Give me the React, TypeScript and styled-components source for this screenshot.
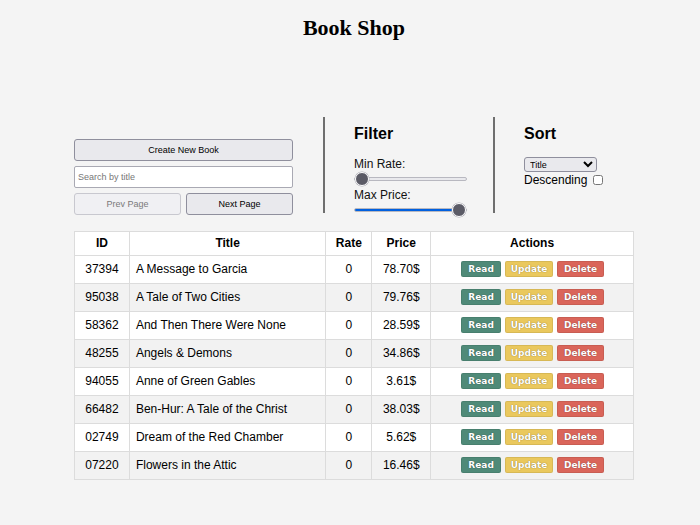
import React from 'react'
import styled, { createGlobalStyle } from 'styled-components'

interface Book {
  id: string
  title: string
  rate: number
  price: string
}

const books: Book[] = [
  { id: '37394', title: 'A Message to Garcia', rate: 0, price: '78.70' },
  { id: '95038', title: 'A Tale of Two Cities', rate: 0, price: '79.76' },
  { id: '58362', title: 'And Then There Were None', rate: 0, price: '28.59' },
  { id: '48255', title: 'Angels & Demons', rate: 0, price: '34.86' },
  { id: '94055', title: 'Anne of Green Gables', rate: 0, price: '3.61' },
  { id: '66482', title: 'Ben-Hur: A Tale of the Christ', rate: 0, price: '38.03' },
  { id: '02749', title: 'Dream of the Red Chamber', rate: 0, price: '5.62' },
  { id: '07220', title: 'Flowers in the Attic', rate: 0, price: '16.46' },
]

const GlobalStyle = createGlobalStyle`
  html, body {
    margin: 0;
    background: #f4f4f4;
  }
  #root {
    padding-left: 8px;
  }
`

const Page = styled.div`
  display: flex;
  flex-direction: column;
  align-items: center;
  font-family: 'Liberation Sans', Arial, sans-serif;
  color: #000;
`

const Title = styled.h1`
  font-family: 'Liberation Serif', 'Times New Roman', serif;
  font-size: 22px;
  font-weight: bold;
  margin: 15px 0 0;
  line-height: 26px;
`

const Controls = styled.div`
  display: flex;
  align-items: stretch;
  margin-top: 76px;
`

const LeftPanel = styled.div`
  width: 219px;
  display: flex;
  flex-direction: column;
  justify-content: flex-end;
  gap: 5px;
  padding-right: 30px;
  margin-bottom: -2px;
`

const Section = styled.div<{ $width: number }>`
  width: ${({ $width }) => $width}px;
  border-left: 2px solid #6e6e6e;
  padding: 0 0 0 29px;
  height: 96px;
`

const SectionTitle = styled.h2`
  font-size: 16px;
  font-weight: bold;
  margin: 8px 0 14px;
  line-height: 18px;
`

const GreyButton = styled.button`
  height: 22px;
  font-family: 'Liberation Sans', Arial, sans-serif;
  font-size: 9px;
  color: #000;
  background: #e9e9ed;
  border: 1px solid #8f8f9d;
  border-radius: 3px;
  padding: 0;
  &:disabled {
    background: #f0f0f3;
    color: #7a7a7a;
    border-color: #c8c8cf;
  }
`

const SearchInput = styled.input`
  height: 22px;
  box-sizing: border-box;
  font-family: 'Liberation Sans', Arial, sans-serif;
  font-size: 9px;
  padding: 0 3px;
  border: 1px solid #a9a9b3;
  border-radius: 2px;
  background: #fff;
  &::placeholder {
    color: #777;
  }
`

const PagerRow = styled.div`
  display: grid;
  grid-template-columns: 107px 107px;
  gap: 5px;
`

const FieldLabel = styled.div`
  font-size: 12px;
  line-height: 14px;
  color: #111;
`

const Range = styled.input`
  -webkit-appearance: none;
  appearance: none;
  width: 113px;
  height: 14px;
  margin: 1px 0 2px;
  display: block;
  background: transparent;
  &::-webkit-slider-runnable-track {
    height: 4px;
    border: 1px solid #b8b8c0;
    border-radius: 3px;
    background: linear-gradient(
      to right,
      #0060df 0 var(--fill),
      #e9e9ed var(--fill) 100%
    );
  }
  &::-webkit-slider-thumb {
    -webkit-appearance: none;
    width: 14px;
    height: 14px;
    margin-top: -6px;
    border-radius: 50%;
    background: #5b5b66;
    border: 1px solid #fff;
    box-shadow: 0 0 0 0.5px #b0b0b8;
  }
`

const Select = styled.select`
  width: 73px;
  height: 15px;
  font-family: 'Liberation Sans', Arial, sans-serif;
  font-size: 9px;
  padding: 0 0 0 1px;
  border: 1px solid #8f8f9d;
  border-radius: 3px;
  background: #e9e9ed;
  display: block;
  margin-top: 1px;
`

const CheckRow = styled.label`
  display: flex;
  align-items: center;
  gap: 6px;
  font-size: 12px;
  line-height: 14px;
  margin-top: 1px;
  input {
    margin: 0;
    width: 10px;
    height: 10px;
  }
`

const Table = styled.table`
  width: 560px;
  border-collapse: collapse;
  margin-top: 18px;
  background: #fff;
  font-size: 12px;
  th, td {
    border: 1px solid #dcdcdc;
    text-align: center;
    padding: 0 0 1px;
  }
  th {
    height: 22px;
    font-weight: bold;
  }
  td {
    height: 26px;
  }
  tbody tr:nth-child(even) {
    background: #f2f2f2;
  }
`

const TitleCell = styled.td`
  && {
    text-align: left;
    padding-left: 6px;
  }
`

const Actions = styled.div`
  display: flex;
  justify-content: center;
  gap: 4px;
  padding-left: 1px;
`

const ActionButton = styled.button<{ $color: string; $width: number }>`
  width: ${({ $width }) => $width}px;
  height: 16px;
  padding: 0;
  border: 1px solid rgba(0, 0, 0, 0.08);
  border-radius: 2px;
  background: ${({ $color }) => $color};
  color: #fff;
  font-family: 'DejaVu Sans', Verdana, sans-serif;
  font-size: 9px;
  line-height: 14px;
  font-weight: bold;
  text-shadow: 0 0 1px rgba(0, 0, 0, 0.55);
`

export default function App() {
  return (
    <Page>
      <GlobalStyle />
      <Title>Book Shop</Title>
      <Controls>
        <LeftPanel>
          <GreyButton>Create New Book</GreyButton>
          <SearchInput placeholder="Search by title" />
          <PagerRow>
            <GreyButton disabled>Prev Page</GreyButton>
            <GreyButton>Next Page</GreyButton>
          </PagerRow>
        </LeftPanel>
        <Section $width={139}>
          <SectionTitle>Filter</SectionTitle>
          <FieldLabel>Min Rate:</FieldLabel>
          <Range type="range" min={0} max={5} defaultValue={0} style={{ ['--fill' as string]: '0%' }} />
          <FieldLabel>Max Price:</FieldLabel>
          <Range type="range" min={0} max={100} defaultValue={100} style={{ ['--fill' as string]: '100%' }} />
        </Section>
        <Section $width={110}>
          <SectionTitle>Sort</SectionTitle>
          <Select defaultValue="title">
            <option value="title">Title</option>
            <option value="rate">Rate</option>
            <option value="price">Price</option>
          </Select>
          <CheckRow>
            Descending
            <input type="checkbox" />
          </CheckRow>
        </Section>
      </Controls>
      <Table>
        <colgroup>
          <col style={{ width: 55 }} />
          <col style={{ width: 197 }} />
          <col style={{ width: 46 }} />
          <col style={{ width: 59 }} />
          <col style={{ width: 203 }} />
        </colgroup>
        <thead>
          <tr>
            <th>ID</th>
            <th>Title</th>
            <th>Rate</th>
            <th>Price</th>
            <th>Actions</th>
          </tr>
        </thead>
        <tbody>
          {books.map((b) => (
            <tr key={b.id}>
              <td>{b.id}</td>
              <TitleCell>{b.title}</TitleCell>
              <td>{b.rate}</td>
              <td>{b.price}$</td>
              <td>
                <Actions>
                  <ActionButton $color="#4f8a78" $width={40}>Read</ActionButton>
                  <ActionButton $color="#eac85d" $width={48}>Update</ActionButton>
                  <ActionButton $color="#da655a" $width={47}>Delete</ActionButton>
                </Actions>
              </td>
            </tr>
          ))}
        </tbody>
      </Table>
    </Page>
  )
}
